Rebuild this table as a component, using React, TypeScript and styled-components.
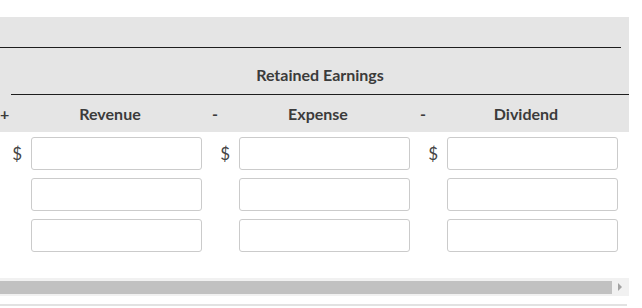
import React from 'react'
import styled, { createGlobalStyle } from 'styled-components'

const GlobalStyle = createGlobalStyle`
  body {
    margin: 0;
    background: #fff;
    font-family: Lato, 'Open Sans', sans-serif;
    color: #3b3b3b;
  }
`

const COLUMNS = '31px 171px 37px 171px 37px 171px 11px'

const Page = styled.div`
  width: 629px;
  padding-top: 17px;
`

const Head = styled.div`
  background: #e5e5e5;
`

const TopRow = styled.div`
  height: 30px;
  width: 621px;
  border-bottom: 1px solid #1e1e1e;
`

const TitleRow = styled.div`
  box-sizing: border-box;
  margin-left: 11px;
  height: 47px;
  padding-top: 7px;
  border-bottom: 1px solid #1e1e1e;
  display: flex;
  align-items: center;
  justify-content: center;
  font-size: 16px;
  font-weight: 700;
`

const Grid = styled.div<{ $height?: number }>`
  display: grid;
  grid-template-columns: ${COLUMNS};
  align-items: center;
  height: ${(p) => (p.$height ? `${p.$height}px` : 'auto')};
`

const Operator = styled.div<{ $pad: number }>`
  font-size: 16px;
  font-weight: 700;
  padding-left: ${(p) => p.$pad}px;
`

const Label = styled.div`
  font-size: 16px;
  font-weight: 700;
  text-align: center;
  padding-right: 13px;
`

const Body = styled.div`
  display: flex;
  flex-direction: column;
  gap: 8px;
  padding-top: 5px;
`

const Currency = styled.div`
  text-align: right;
  padding-right: 9px;
  font-size: 17px;
  font-weight: 400;
  color: #444;
`

const Field = styled.input`
  box-sizing: border-box;
  width: 171px;
  height: 33px;
  border: 1px solid #cbcbcb;
  border-radius: 3px;
  background: #fff;
  margin: 0;
  padding: 0 6px;
  font: inherit;
`

const Track = styled.div`
  margin-top: 26px;
  height: 18px;
  background: #f1f1f1;
  display: flex;
  align-items: center;
  padding-right: 2px;
`

const Thumb = styled.div`
  width: 612px;
  height: 13px;
  background: #c1c1c1;
`

const Arrow = styled.div`
  margin-left: 6px;
  width: 0;
  height: 0;
  border-top: 4px solid transparent;
  border-bottom: 4px solid transparent;
  border-left: 4px solid #a3a3a3;
`

const Rule = styled.div`
  margin-top: 8px;
  height: 2px;
  width: 627px;
  background: #e2e2e2;
`

const heads = ['Revenue', 'Expense', 'Dividend']

export default function App() {
  return (
    <Page>
      <GlobalStyle />
      <Head>
        <TopRow />
        <TitleRow>Retained Earnings</TitleRow>
        <Grid $height={37}>
          <Operator $pad={0}>+</Operator>
          <Label>{heads[0]}</Label>
          <Operator $pad={10}>-</Operator>
          <Label>{heads[1]}</Label>
          <Operator $pad={10}>-</Operator>
          <Label>{heads[2]}</Label>
          <div />
        </Grid>
      </Head>
      <Body>
        {[0, 1, 2].map((row) => (
          <Grid key={row}>
            <Currency>{row === 0 ? '$' : ''}</Currency>
            <Field />
            <Currency>{row === 0 ? '$' : ''}</Currency>
            <Field />
            <Currency>{row === 0 ? '$' : ''}</Currency>
            <Field />
            <div />
          </Grid>
        ))}
      </Body>
      <Track>
        <Thumb />
        <Arrow />
      </Track>
      <Rule />
    </Page>
  )
}
